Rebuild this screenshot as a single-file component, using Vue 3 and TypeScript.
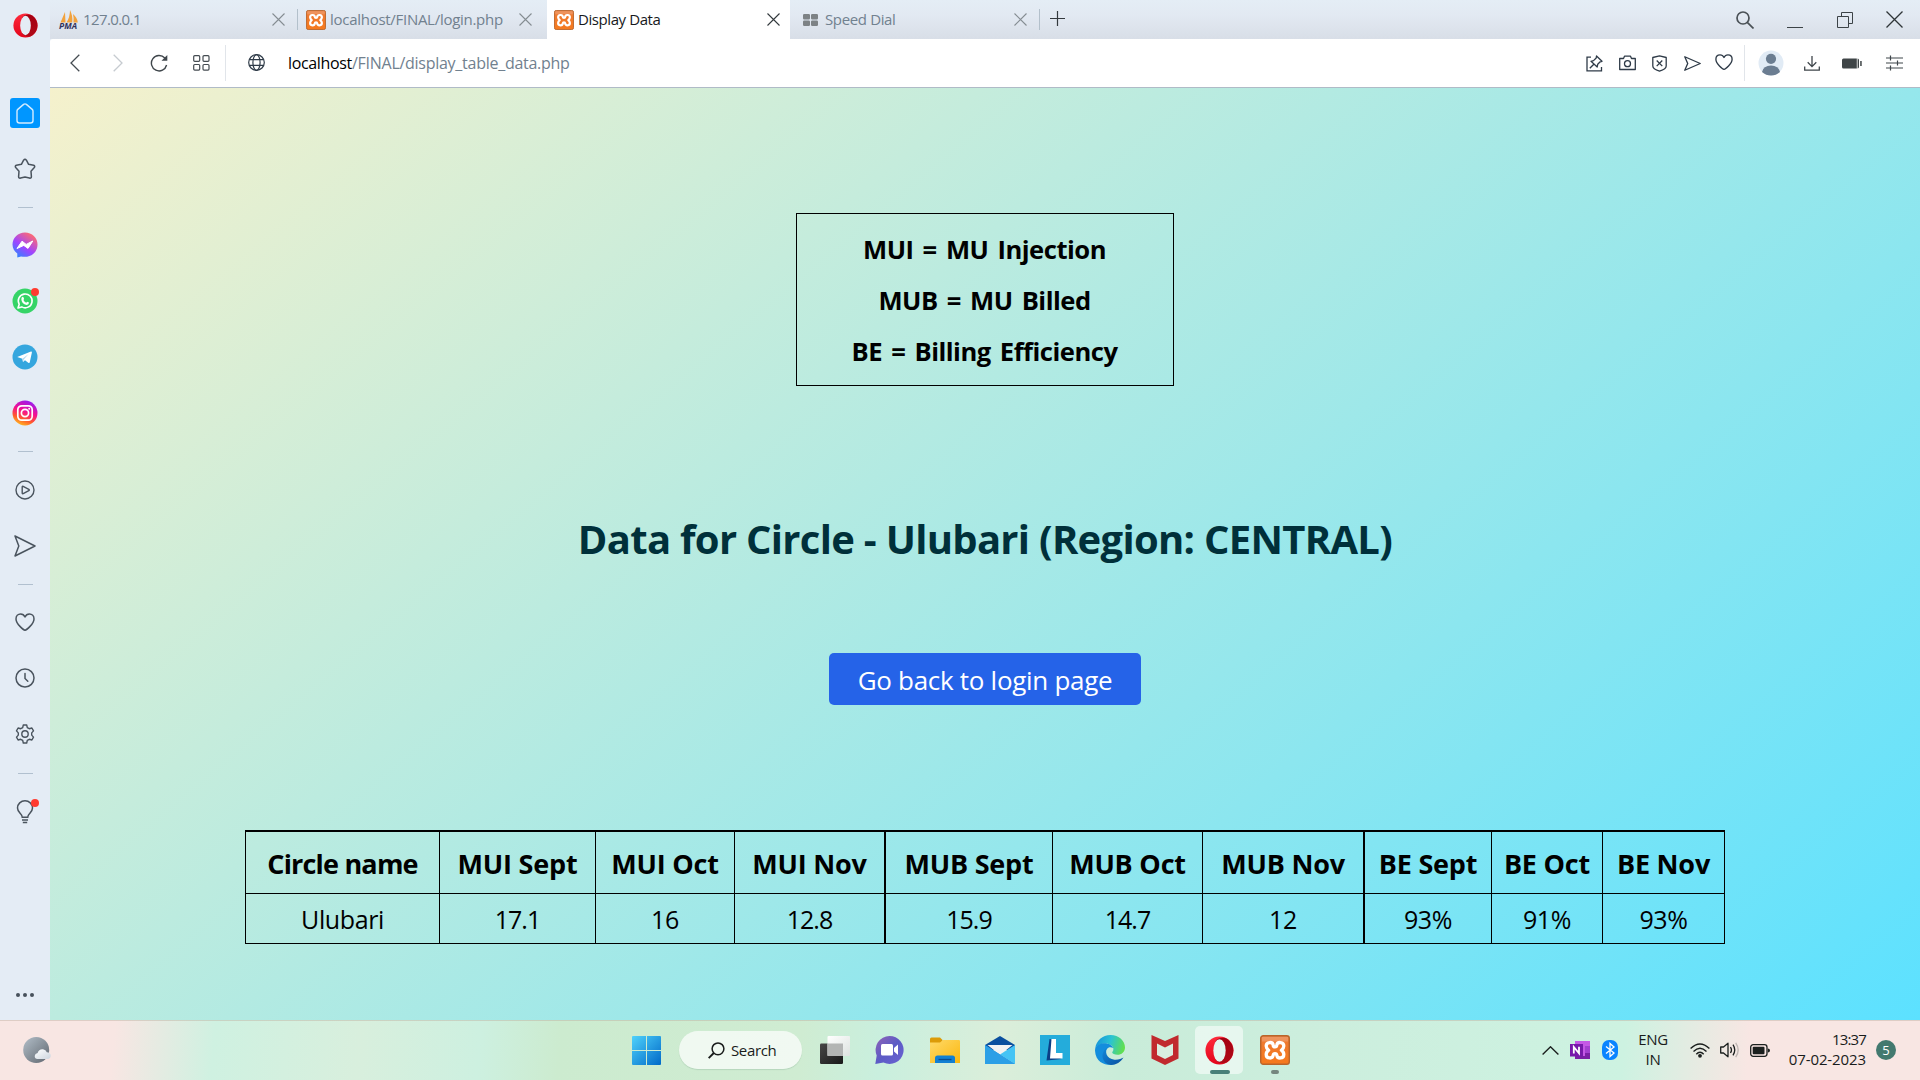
<script setup lang="ts">
interface Column {
  head: string
  value: string
  width: number
  kind?: string
}

const legend: string[] = ['MUI = MU Injection', 'MUB = MU Billed', 'BE = Billing Efficiency']

const columns: Column[] = [
  { head: 'Circle name', value: 'Ulubari', width: 194, kind: 'name' },
  { head: 'MUI Sept', value: '17.1', width: 156, kind: 'decimal' },
  { head: 'MUI Oct', value: '16', width: 139 },
  { head: 'MUI Nov', value: '12.8', width: 150, kind: 'decimal' },
  { head: 'MUB Sept', value: '15.9', width: 168, kind: 'group decimal' },
  { head: 'MUB Oct', value: '14.7', width: 150, kind: 'decimal' },
  { head: 'MUB Nov', value: '12', width: 161 },
  { head: 'BE Sept', value: '93%', width: 128, kind: 'group' },
  { head: 'BE Oct', value: '91%', width: 111 },
  { head: 'BE Nov', value: '93%', width: 123, kind: 'last' },
]
</script>

<template>
  <div class="desktop">
    <svg class="defs" width="0" height="0" aria-hidden="true">
      <defs>
        <linearGradient id="op" x1="0" y1="0" x2="0" y2="1">
          <stop offset="0" stop-color="#ff2a3c" /><stop offset="1" stop-color="#e3051b" />
        </linearGradient>
        <linearGradient id="opd" x1="0" y1="0" x2="0" y2="1">
          <stop offset="0" stop-color="#a30012" /><stop offset="1" stop-color="#b00a18" />
        </linearGradient>
        <linearGradient id="msg" x1="0" y1="1" x2=".7" y2="0">
          <stop offset="0" stop-color="#1394ff" /><stop offset=".5" stop-color="#a044ff" /><stop offset="1" stop-color="#ff6b70" />
        </linearGradient>
        <linearGradient id="ig" x1=".2" y1="1" x2=".6" y2="0">
          <stop offset="0" stop-color="#ffc91e" /><stop offset=".3" stop-color="#ff5a2c" /><stop offset=".6" stop-color="#f5108f" /><stop offset="1" stop-color="#9a1cf0" />
        </linearGradient>
        <linearGradient id="xam" x1="0" y1="0" x2="0" y2="1">
          <stop offset="0" stop-color="#e8854a" /><stop offset=".22" stop-color="#ef7a30" /><stop offset="1" stop-color="#f6791c" />
        </linearGradient>
        <linearGradient id="win" x1="0" y1="0" x2="1" y2="1">
          <stop offset="0" stop-color="#4fd2fb" /><stop offset="1" stop-color="#0069c8" />
        </linearGradient>
        <linearGradient id="moon" x1="0" y1="0" x2="1" y2="1">
          <stop offset="0" stop-color="#b3bfc9" /><stop offset="1" stop-color="#5f666e" />
        </linearGradient>
        <linearGradient id="cloud" x1="0" y1="0" x2="1" y2="1">
          <stop offset="0" stop-color="#fff" /><stop offset="1" stop-color="#cdd5de" />
        </linearGradient>
        <linearGradient id="dark" x1="0" y1="0" x2="1" y2="1">
          <stop offset="0" stop-color="#474747" /><stop offset="1" stop-color="#191919" />
        </linearGradient>
        <linearGradient id="pane" x1="0" y1="0" x2="1" y2="1">
          <stop offset="0" stop-color="#fff" /><stop offset="1" stop-color="#dde3e0" />
        </linearGradient>
        <linearGradient id="chat" x1="0" y1="0" x2="1" y2="1">
          <stop offset="0" stop-color="#9163b5" /><stop offset=".5" stop-color="#5c5bc6" /><stop offset="1" stop-color="#6a62d2" />
        </linearGradient>
        <linearGradient id="fold" x1="0" y1="0" x2="1" y2="1">
          <stop offset="0" stop-color="#ffd968" /><stop offset="1" stop-color="#fbb80f" />
        </linearGradient>
        <linearGradient id="edgeTop" x1="0" y1=".3" x2="1" y2=".5">
          <stop offset="0" stop-color="#1593dc" /><stop offset=".5" stop-color="#2bc3d2" /><stop offset="1" stop-color="#62e04b" />
        </linearGradient>
        <linearGradient id="edgeLow" x1="0" y1="0" x2="1" y2="1">
          <stop offset="0" stop-color="#118adb" /><stop offset="1" stop-color="#0a4d9e" />
        </linearGradient>

        <symbol id="i-close" viewBox="0 0 13 13">
          <path d="M.5 .5l12 12M12.5 .5l-12 12" fill="none" stroke="currentColor" stroke-width="1.1" />
        </symbol>
        <symbol id="i-opera" viewBox="0 0 30 30">
          <ellipse cx="15" cy="15" rx="14.5" ry="14.5" fill="url(#op)" />
          <path d="M11 5.2C14 1.6 19.5 .8 23.5 3.4A14.5 14.5 0 0 1 23.5 26.6C19.5 29.2 14 28.4 11 24.8z" fill="url(#opd)" />
          <ellipse cx="15" cy="15" rx="6.4" ry="11.6" fill="var(--hole)" />
        </symbol>
        <symbol id="i-xampp" viewBox="0 0 30 30">
          <rect x=".7" y=".7" width="28.6" height="28.6" rx="2.6" fill="url(#xam)" stroke="#b9652c" stroke-width="1.4" />
          <path d="M2 2h26v4.5H2z" fill="#f0a478" opacity=".55" />
          <path d="M13.2 10.2C12.8 6.4 6.2 6.6 6.2 11C6.2 13.2 7.3 14.2 8.6 15.2C7.2 16.2 6.2 17.3 6.2 19.6C6.2 24 12.8 24 13.2 20.2Q13.4 18.6 15 18.6Q16.6 18.6 16.8 20.2C17.2 24 23.8 24 23.8 19.6C23.8 17.3 22.8 16.2 21.4 15.2C22.7 14.2 23.8 13.2 23.8 11C23.8 6.6 17.2 6.4 16.8 10.2Q16.6 11.9 15 11.9Q13.4 11.9 13.2 10.2z" fill="none" stroke="#fff" stroke-width="3.3" stroke-linejoin="round" />
        </symbol>
        <symbol id="i-send" viewBox="0 0 22 22">
          <path d="M1 1L21 11L1 21L4.8 11z" fill="none" stroke="currentColor" stroke-width="1.5" stroke-linejoin="round" />
        </symbol>
        <symbol id="i-heart" viewBox="0 0 20 20">
          <path d="M10 18.2C8.6 18 1 12 1 6.9C1 4 3 2 5.6 2C7.8 2 9.2 3.2 10 5C10.8 3.2 12.2 2 14.4 2C17 2 19 4 19 6.9C19 12 11.4 18 10 18.2z" fill="none" stroke="currentColor" stroke-width="1.5" stroke-linejoin="round" />
        </symbol>
      </defs>
    </svg>

    <div class="browser">
      <aside class="sidebar">
        <div class="logo"><svg width="25" height="27" class="opera-side"><use href="#i-opera" /></svg></div>
        <div class="item start">
          <span class="home"><svg width="18" height="21" viewBox="0 0 18 21"><path d="M7.6 1.4L1.8 6.4Q1 7.1 1 8.2V17.5Q1 20 3.5 20H14.5Q17 20 17 17.5V8.2Q17 7.1 16.2 6.4L10.4 1.4Q9 .4 7.6 1.4z" fill="none" stroke="#d4ecff" stroke-width="1.4" /></svg></span>
        </div>
        <div class="item"><svg width="22" height="22" viewBox="0 0 22 22"><path d="M9.6 2.2Q11 .4 12.4 2.2L14.6 6.3L19.6 7.2Q21.4 7.9 20.3 9.5L17 13.3L17.4 18.6Q17.3 20.6 15.4 20L11 18.9L6.6 20Q4.7 20.6 4.6 18.6L5 13.3L1.7 9.5Q.6 7.9 2.4 7.2L7.4 6.3z" fill="none" stroke="currentColor" stroke-width="1.5" stroke-linejoin="round" /></svg></div>
        <div class="rule"></div>
        <div class="item"><svg width="26" height="26" viewBox="0 0 26 26"><path d="M13 .5C6 .5 .5 5.6 .5 12.5C.5 16.2 2.5 19.5 5.3 21.6V25.5L9 24.4C18 26.5 25.5 21 25.5 12.5C25.5 5.6 20 .5 13 .5z" fill="url(#msg)" /><path d="M5 16.5L10 9.2L14.2 12.4L20.8 9L16 16.4L11.8 13.4z" fill="#fff" stroke="#fff" stroke-linejoin="round" /></svg></div>
        <div class="item">
          <svg width="26" height="26" viewBox="0 0 26 26"><circle cx="13" cy="13" r="12.5" fill="#35d467" /><path d="M6 20L7.2 16.3A6.9 6.9 0 1 1 9.8 18.9z" fill="none" stroke="#fff" stroke-width="1.6" stroke-linejoin="round" /><path d="M9.8 9.3Q10.9 8.3 11.6 9.5L12.1 10.9L11.4 12Q12.5 14 14.2 14.7L15.2 13.7L17 14.6Q17 16.9 14.7 16.9Q9.5 15.9 9.3 10.9z" fill="#fff" /></svg>
          <i class="dot"></i>
        </div>
        <div class="item"><svg width="26" height="26" viewBox="0 0 26 26"><circle cx="13" cy="13" r="12.5" fill="#35a6de" /><path d="M5.2 13L19 7.6Q20 7.4 19.9 8.4L17.7 18.6Q17.4 19.4 16.6 18.9L13 16.2L11 18.1L10.4 14.8z" fill="#fff" /><path d="M10.4 14.8L16.6 10L11.8 15.4L11 18.1z" fill="#b5d8ee" /></svg></div>
        <div class="item"><svg width="26" height="26" viewBox="0 0 26 26"><circle cx="13" cy="13" r="12.5" fill="url(#ig)" /><rect x="5.8" y="5.8" width="14.4" height="14.4" rx="4" fill="none" stroke="#fff" stroke-width="1.7" /><circle cx="13" cy="13" r="3.6" fill="none" stroke="#fff" stroke-width="1.7" /><circle cx="17.2" cy="8.8" r="1" fill="#fff" /></svg></div>
        <div class="rule r2"></div>
        <div class="item"><svg width="20" height="20" viewBox="0 0 20 20"><g fill="none" stroke="currentColor" stroke-width="1.4"><circle cx="10" cy="10" r="9" /><path d="M7.2 6.9Q7.2 5.9 8.2 6.3L13.8 9.3Q14.8 10 13.8 10.7L8.2 13.7Q7.2 14.1 7.2 13.1z" /></g></svg></div>
        <div class="item"><svg width="22" height="22"><use href="#i-send" /></svg></div>
        <div class="rule"></div>
        <div class="item"><svg width="20" height="20"><use href="#i-heart" /></svg></div>
        <div class="item"><svg width="20" height="20" viewBox="0 0 20 20"><g fill="none" stroke="currentColor" stroke-width="1.5" stroke-linecap="round"><circle cx="10" cy="10" r="9" /><path d="M10 5.5V10.5L12.8 13.3" /></g></svg></div>
        <div class="item"><svg width="20" height="20" viewBox="0 0 20 20"><g fill="none" stroke="currentColor" stroke-width="1.4" stroke-linejoin="round"><path d="M8.3 1H11.7L12.3 3.6L14.3 4.7L16.9 4L18.5 6.9L16.7 8.9V11.1L18.5 13.1L16.9 16L14.3 15.3L12.3 16.4L11.7 19H8.3L7.7 16.4L5.7 15.3L3.1 16L1.5 13.1L3.3 11.1V8.9L1.5 6.9L3.1 4L5.7 4.7L7.7 3.6z" /><circle cx="10" cy="10" r="3.2" /></g></svg></div>
        <div class="rule r4"></div>
        <div class="item">
          <svg width="18" height="24" viewBox="0 0 18 24"><path d="M6 16.5C6 13.5 1.5 12.5 1.5 8A7.5 7.2 0 0 1 16.5 8C16.5 12.5 12 13.5 12 16.5M5.5 17.3H12.5M6 19.9H12M6.8 22.5H11.2" fill="none" stroke="currentColor" stroke-width="1.5" /></svg>
          <i class="dot"></i>
        </div>
        <div class="more"><i></i><i></i><i></i></div>
      </aside>

      <div class="window">
        <header class="tabs">
          <div class="tab first">
            <svg class="fav pma-icon" width="20" height="20" viewBox="0 0 20 20"><path d="M6 2L1.5 12.5H6.5zM11 0Q14 6 13.2 12.5H7.5Q11 7 11 0zM14 4Q18.5 8 18.8 12.5H14.5Q15 8 14 4z" fill="#f2a23c" /><text x="0" y="19.3" class="pma">PMA</text></svg>
            <span class="label t1">127.0.0.1</span>
            <svg class="x" width="13" height="13"><use href="#i-close" /></svg>
          </div>
          <div class="tab second">
            <svg class="fav" width="20" height="20"><use href="#i-xampp" /></svg>
            <span class="label t2">localhost/FINAL/login.php</span>
            <svg class="x" width="13" height="13"><use href="#i-close" /></svg>
          </div>
          <div class="tab active">
            <svg class="fav" width="20" height="20"><use href="#i-xampp" /></svg>
            <span class="label t3">Display Data</span>
            <svg class="x" width="13" height="13"><use href="#i-close" /></svg>
          </div>
          <div class="tab dial">
            <svg class="fav" width="15" height="12" viewBox="0 0 15 12"><path d="M1.2 0H5.8Q7 0 7 1.2V4.3Q7 5.5 5.8 5.5H1.2Q0 5.5 0 4.3V1.2Q0 0 1.2 0zM9.2 0H13.8Q15 0 15 1.2V4.3Q15 5.5 13.8 5.5H9.2Q8 5.5 8 4.3V1.2Q8 0 9.2 0zM1.2 6.5H5.8Q7 6.5 7 7.7V10.8Q7 12 5.8 12H1.2Q0 12 0 10.8V7.7Q0 6.5 1.2 6.5zM9.2 6.5H13.8Q15 6.5 15 7.7V10.8Q15 12 13.8 12H9.2Q8 12 8 10.8V7.7Q8 6.5 9.2 6.5z" fill="#7d8285" /></svg>
            <span class="label t4">Speed Dial</span>
            <svg class="x" width="13" height="13"><use href="#i-close" /></svg>
          </div>
          <svg class="plus" width="15" height="15" viewBox="0 0 15 15"><path d="M7.5 0V15M0 7.5H15" stroke="#33393d" stroke-width="1.2" /></svg>
          <div class="controls">
            <svg width="18" height="18" viewBox="0 0 18 18"><g fill="none" stroke="#4a5156" stroke-width="1.7"><circle cx="7" cy="7" r="6" /><path d="M11.3 11.3L17.5 17.5" /></g></svg>
            <svg width="16" height="18" viewBox="0 0 16 18"><path d="M0 16.5H16" stroke="#3c4347" stroke-width="1" /></svg>
            <svg width="16" height="16" viewBox="0 0 16 16"><path d="M.5 4.5H11.5V15.5H.5zM4.5 4.5V.5H15.5V11.5H11.5" fill="none" stroke="#3c4347" stroke-width="1" /></svg>
            <svg width="17" height="17" viewBox="0 0 17 17"><path d="M.5 .5l16 16M16.5 .5l-16 16" stroke="#2f3538" stroke-width="1.3" /></svg>
          </div>
        </header>

        <nav class="toolbar">
          <svg width="10" height="18" viewBox="0 0 10 18"><path d="M9.3 .8L1 9L9.3 17.2" fill="none" stroke="#454c52" stroke-width="1.3" /></svg>
          <svg width="10" height="18" viewBox="0 0 10 18"><path d="M.7 .8L9 9L.7 17.2" fill="none" stroke="#c6cbd0" stroke-width="1.3" /></svg>
          <svg width="18" height="18" viewBox="0 0 18 18"><path d="M14.8 4A7.7 7.7 0 1 0 16.6 11" fill="none" stroke="#3f464b" stroke-width="1.4" /><path d="M17.3 1V6.8H11.5z" fill="#3f464b" /></svg>
          <svg width="17" height="16" viewBox="0 0 17 16"><g fill="none" stroke="#454c52" stroke-width="1.2"><rect x=".7" y=".7" width="6" height="5.6" rx="1" /><rect x="10" y=".7" width="6" height="5.6" rx="1" /><rect x=".7" y="9.5" width="6" height="5.6" rx="1" /><rect x="10" y="9.5" width="6" height="5.6" rx="1" /></g></svg>
          <i class="bar"></i>
          <svg class="globe" width="17" height="17" viewBox="0 0 17 17"><g fill="none" stroke="#2f3b48" stroke-width="1.2"><circle cx="8.5" cy="8.5" r="7.8" /><ellipse cx="8.5" cy="8.5" rx="3.6" ry="7.8" /><path d="M1.4 5.6H15.6M1.4 11.4H15.6" /></g></svg>
          <p class="url"><b>localhost</b>/FINAL/display_table_data.php</p>
          <svg width="17" height="17" viewBox="0 0 17 17"><g fill="none" stroke="#2f3b48" stroke-width="1.3"><path d="M5 2.2H1V15.8H15.5V12" /><path d="M10.5 1L16 6.3L14.2 6.8L11.7 9.3L11.2 12L5 6.3L7.5 5.6L10.2 3zM7.8 9.2L3.8 13.2" stroke-linejoin="round" /></g></svg>
          <svg width="17" height="16" viewBox="0 0 17 16"><g fill="none" stroke="#2f3b48" stroke-width="1.3"><path d="M.7 3.5H4.5L5.5 1.2H11.5L12.5 3.5H16.3V14.5H.7z" stroke-linejoin="round" /><circle cx="8.5" cy="8.7" r="3" /></g></svg>
          <svg width="15" height="17" viewBox="0 0 15 17"><g fill="none" stroke="#2f3b48" stroke-width="1.3"><path d="M7.5 .8L14.2 2.5V11Q14.2 14 7.5 16.2Q.8 14 .8 11V2.5z" stroke-linejoin="round" /><path d="M4.7 5.5L10.3 11.1M10.3 5.5L4.7 11.1" /></g></svg>
          <svg class="ink" width="17" height="15" viewBox="0 0 22 22" preserveAspectRatio="none"><path d="M1 1L21 11L1 21L4.8 11z" fill="none" stroke="currentColor" stroke-width="1.7" stroke-linejoin="round" /></svg>
          <svg class="ink lift" width="18" height="18"><use href="#i-heart" /></svg>
          <i class="bar"></i>
          <svg width="26" height="26" viewBox="0 0 26 26"><circle cx="13" cy="13" r="12.5" fill="#e1ebf5" /><circle cx="13" cy="8.8" r="5.1" fill="#6b7d91" /><path d="M4 22Q5.5 15.5 13 15.5Q20.5 15.5 22 22Q18 25.5 13 25.5Q8 25.5 4 22z" fill="#6b7d91" /></svg>
          <svg width="16" height="15" viewBox="0 0 16 15"><path d="M8 0V10.5M3.7 6.3L8 10.6L12.3 6.3M.7 10.5V14.2H15.3V10.5" fill="none" stroke="#3f464b" stroke-width="1.3" /></svg>
          <svg width="20" height="11" viewBox="0 0 20 11"><path d="M1.5 .5H14.8V10.5H1.5Q0 10.5 0 9V2Q0 .5 1.5 .5zM15.6 .5Q17 .7 17 2V9Q17 10.3 15.6 10.5zM18.2 3H19.7V8H18.2z" fill="#3f4547" /></svg>
          <svg width="17" height="16" viewBox="0 0 17 16"><path d="M0 3H17M0 8H17M0 13H17M4.5 .5V5.5M11.5 5.5V10.5M4.5 10.5V15.5" stroke="#3f464b" stroke-width="1.2" /></svg>
        </nav>

        <main class="page">
          <section class="legend">
            <p v-for="line in legend" :key="line">{{ line }}</p>
          </section>
          <h1>Data for Circle - Ulubari (Region: CENTRAL)</h1>
          <a class="back">Go back to login page</a>
          <table>
            <colgroup><col v-for="c in columns" :key="c.head" :style="{ width: c.width + 'px' }" /></colgroup>
            <thead><tr><th v-for="c in columns" :key="c.head" :class="c.kind">{{ c.head }}</th></tr></thead>
            <tbody><tr><td v-for="c in columns" :key="c.head" :class="c.kind">{{ c.value }}</td></tr></tbody>
          </table>
        </main>
      </div>
    </div>

    <footer class="taskbar">
      <div class="weather"><svg width="28" height="26" viewBox="0 0 28 26"><circle cx="13.2" cy="13" r="13" fill="url(#moon)" /><path d="M14.5 22Q11.7 21.8 11.7 19Q11.9 16.4 14.6 15.9Q16 11.8 20 12.2Q23 12.6 23.8 15.2Q27.8 15.4 27.8 18.5Q27.7 21.8 24.5 22z" fill="url(#cloud)" /></svg></div>

      <div class="apps">
        <span class="app"><svg width="29" height="29" viewBox="0 0 29 29"><path d="M1 0H14V14H0V1Q0 0 1 0zM15 0H28Q29 0 29 1V14H15zM0 15H14V29H1Q0 29 0 28zM15 15H29V28Q29 29 28 29H15z" fill="url(#win)" /></svg></span>
        <div class="search">
          <svg width="17" height="17" viewBox="0 0 17 17"><g fill="none" stroke="#191c1b" stroke-width="1.5"><circle cx="10" cy="6.8" r="5.9" /><path d="M5.8 11L.7 16.2" stroke-width="1.9" /></g></svg>
          <span>Search</span>
        </div>
        <span class="app"><svg width="30" height="28" viewBox="0 0 30 28"><rect y="7.5" width="23" height="20.5" rx="1.2" fill="url(#dark)" /><rect x="7.5" width="22.5" height="20" rx="1" fill="url(#pane)" /><path d="M7.5 7.5H23V20H7.5z" fill="#b3b5b4" /></svg></span>
        <span class="app"><svg width="29" height="28" viewBox="0 0 29 28"><path d="M14.5 0A14 14 0 1 1 8.5 26.6L.3 28L1.7 19.5A14 14 0 0 1 14.5 0z" fill="url(#chat)" /><rect x="6" y="8" width="12" height="11.5" rx="1.5" fill="#fff" /><path d="M19 12L23 8.5V19L19 15.5z" fill="#fff" /></svg></span>
        <span class="app"><svg width="30" height="26" viewBox="0 0 30 26"><path d="M0 2Q0 .5 1.5 .5H10L12.5 3V9H0z" fill="#dc9b08" /><path d="M0 5.5H10L13 3H29Q30 3 30 4V26H0z" fill="url(#fold)" /><path d="M5 26V21Q5 18.5 7.5 18.5H22.5Q25 18.5 25 21V26z" fill="#1280d3" /><path d="M8.5 22.5H21.5" stroke="#0a4c90" stroke-width="1.3" /></svg></span>
        <span class="app"><svg width="30" height="28" viewBox="0 0 30 28"><path d="M0 9L15 0L30 9V14H0z" fill="#0a4f9f" /><path d="M2.5 9H27.5L15 19z" fill="#f3f3f3" /><path d="M0 9L30 28H1Q0 28 0 27z" fill="#1e8fe0" /><path d="M30 9L15 18.5L30 28z" fill="#45c4f5" /><path d="M15 18.5L0 9V28H30z" fill="#2c9fe6" /></svg></span>
        <span class="app"><svg width="30" height="30" viewBox="0 0 30 30"><path d="M0 0H30V30H0z" fill="#24acdb" /><path d="M9.5 4L12 4.5V20L22 24L6.5 25.5z" fill="#0b3f86" /><path d="M11.5 4H16V18H22.5V23.5H10z" fill="#fff" /></svg></span>
        <span class="app"><svg width="30" height="30" viewBox="0 0 30 30"><path d="M.2 13.5C1.2 5.5 7.5 0 15.5 0C24 0 30 6 30 12.5C30 17 26.5 19.8 22.5 19.8C19.5 19.8 17.2 18.5 17.2 17.5C17.2 16.8 18.4 16.2 18.4 14C18.4 11 15 8.5 10.5 8.5C6 8.5 2 10.5 .2 13.5z" fill="url(#edgeTop)" /><path d="M.2 13.5C2 9.6 6 8.2 9.5 8.2C14 8.2 17.6 10.5 18.2 13C14 10.5 9.5 14 10.5 19.5C11.5 25 16 28.5 19.5 29C16 31 .5 30.5 0 15.5z" fill="#138ddd" /><path d="M13 12.5C9 16 11.5 24 19.5 24.7C23.5 25 26.5 23.5 28.5 22.5C26 27 21 30 16 30C10 29.5 7 24 7.5 20C8 16 10.5 13.2 13 12.5z" fill="url(#edgeLow)" /></svg></span>
        <span class="app"><svg width="28" height="30" viewBox="0 0 28 30"><path d="M.5 0L14 6L27.5 0V23.5L14 30L.5 23.5z" fill="#c1292e" /><path d="M6 8.5L14 12.5L22 8.5V20L14 24L6 20z" fill="#d9eee0" /></svg></span>
        <span class="app open"><svg class="opera-task" width="29" height="29"><use href="#i-opera" /></svg><i class="run wide"></i></span>
        <span class="app"><svg width="30" height="30"><use href="#i-xampp" /></svg><i class="run"></i></span>
      </div>

      <div class="tray">
        <svg class="chev" width="17" height="9" viewBox="0 0 17 9"><path d="M.6 8.4L8.5 .8L16.4 8.4" fill="none" stroke="#1b1f1e" stroke-width="1.4" /></svg>
        <svg class="note" width="20" height="18" viewBox="0 0 20 18"><path d="M5 0H20V18H5z" fill="#c558e6" /><path d="M15 5H20V12H15z" fill="#a33fd0" /><path d="M15 12H20V18H5V15H15z" fill="#7a1fa5" /><path d="M0 3H13V15.5H0z" fill="#7719aa" /><path d="M3.8 12.5V6L9 12.3V5.8" fill="none" stroke="#fff" stroke-width="1.8" /></svg>
        <svg class="blue" width="16" height="20" viewBox="0 0 16 20"><rect width="16" height="20" rx="7" fill="#0a84ff" /><path d="M4 6.5L12 13L8 16.5V3.5L12 7L4 13.5" fill="none" stroke="#fff" stroke-width="1.3" /></svg>
        <p class="lang"><span>ENG</span><span>IN</span></p>
        <svg class="wifi" width="20" height="15" viewBox="0 0 20 15"><g fill="none" stroke="#1b1f1e" stroke-width="1.4"><path d="M.6 5.5Q10 -3.7 19.4 5.5M3.5 8.5Q10 2 16.5 8.5M6.3 11.2Q10 7.3 13.7 11.2" /></g><circle cx="10" cy="12.8" r="1.9" fill="#1b1f1e" /></svg>
        <svg class="vol" width="20" height="16" viewBox="0 0 20 16"><g fill="none" stroke="#1b1f1e" stroke-width="1.3"><path d="M.7 5H3.5L8 1.2V14.8L3.5 11H.7z" stroke-linejoin="round" /><path d="M10.5 5Q12.5 8 10.5 11M13 2.7Q16.5 8 13 13.3" /><path d="M15.7 .8Q20.7 8 15.7 15.2" opacity=".25" /></g></svg>
        <svg class="batt" width="20" height="13" viewBox="0 0 20 13"><rect x=".7" y=".7" width="16.3" height="11.6" rx="2.5" fill="none" stroke="#1b1f1e" stroke-width="1.3" /><rect x="2.7" y="2.7" width="11.8" height="7.6" rx="1" fill="#1b1f1e" /><path d="M17.8 4.5Q20 4.5 20 6.5Q20 8.5 17.8 8.5z" fill="#1b1f1e" /></svg>
        <p class="clock"><span class="hm">13:37</span><span class="date">07-02-2023</span></p>
        <span class="count">5</span>
      </div>
    </footer>
  </div>
</template>

<style>
body { margin: 0; overflow: hidden; }
</style>

<style scoped>
.desktop {
  width: 1920px;
  height: 1080px;
  display: flex;
  flex-direction: column;
  font-family: 'Open Sans', 'Noto Sans', sans-serif;
  font-size: 15px;
  color: #000;
}
.defs { position: absolute; }
svg { display: block; flex: none; }
p { margin: 0; }
.browser { height: 1020px; display: flex; background: #e4ecf5; }

.sidebar { width: 50px; display: flex; flex-direction: column; align-items: center; color: #4a545e; }
.logo { height: 85px; padding-top: 12px; box-sizing: border-box; }
.opera-side { --hole: #e4ecf5; }
.item { height: 56px; width: 50px; box-sizing: border-box; padding-right: 1px; display: flex; align-items: center; justify-content: center; position: relative; }
.start { padding-right: 0; }
.home { width: 30px; height: 30px; border-radius: 3px; background: #0096ff; display: flex; align-items: center; justify-content: center; }
.rule { height: 20px; width: 15px; display: flex; align-items: center; }
.rule::before { content: ''; height: 1px; width: 15px; background: #b1c0cf; }
.r2 { height: 21px; }
.r4 { height: 22px; }
.dot { position: absolute; left: 31px; top: 15px; width: 8px; height: 8px; border-radius: 4px; background: #ff3b30; }
.more { margin-top: auto; height: 50px; display: flex; align-items: center; gap: 3px; }
.more i { width: 4px; height: 4px; border-radius: 2px; background: #47515b; }

.window { flex: 1; min-width: 0; display: flex; flex-direction: column; }
.tabs { height: 39px; display: flex; background: linear-gradient(#e4edf5 0%, #e2e9f2 40%, #d8dee7 100%); color: #71818f; }
.tab { height: 39px; box-sizing: border-box; display: flex; align-items: center; }
.fav { margin-right: 4px; }
.x { margin-left: auto; color: #858d92; }
.label { white-space: nowrap; line-height: 39px; }
.first { width: 247px; padding: 0 12px 0 9px; }
.second { width: 250px; padding: 0 15px 0 8px; border-left: 1px solid #b3c0cb; border-image: linear-gradient(transparent 24%, #b3c0cb 24%, #b3c0cb 76%, transparent 76%) 1; }
.active { width: 243px; padding: 0 10px 0 7px; background: #fff; color: #17191c; }
.active .x { color: #33393d; }
.dial { width: 250px; padding: 0 12px 0 13px; border-right: 1px solid #b3c0cb; border-image: linear-gradient(transparent 24%, #b3c0cb 24%, #b3c0cb 76%, transparent 76%) 1; }
.dial .fav { margin-right: 7px; }
.t1 { letter-spacing: -0.6px; }
.t2 { letter-spacing: -0.28px; }
.t3 { letter-spacing: -0.42px; }
.t4 { letter-spacing: -0.36px; }
.pma-icon { overflow: visible; }
.pma { font-size: 8.5px; font-weight: 700; font-style: italic; fill: #32325c; }
.plus { margin: 11px 0 0 10px; }
.controls { margin-left: auto; margin-right: 17px; display: flex; align-items: center; }
.controls svg:nth-child(1) { margin-right: 33px; }
.controls svg:nth-child(2) { margin-right: 34px; }
.controls svg:nth-child(3) { margin-right: 33px; }

.toolbar {
  height: 49px;
  box-sizing: border-box;
  border-bottom: 1px solid #b0bbc7;
  border-top-left-radius: 3px;
  background: #fff;
  display: grid;
  grid-template-columns: 50px 36px 46px 38px 11px 50px 1fr 34px 32px 32px 34px 30px 11px 41px 42px 38px 46px 3px;
  align-items: center;
  justify-items: center;
}
.bar { width: 1px; height: 36px; background: #e1e5ea; }
.globe { margin-bottom: 2px; }
.ink { color: #2f3b48; }
.lift { margin-bottom: 2px; }
.url { justify-self: start; padding-left: 7px; font-size: 16px; line-height: 48px; letter-spacing: -0.27px; color: #71818f; white-space: nowrap; }
.url b { font-weight: 400; color: #000; letter-spacing: -0.34px; }

.page {
  flex: 1;
  box-sizing: border-box;
  padding-top: 125px;
  display: flex;
  flex-direction: column;
  align-items: center;
  background: linear-gradient(140deg, #f5f1cc, #5ce1ff);
}
.legend { width: 378px; height: 173px; box-sizing: border-box; border: 1px solid #000; padding-top: 10px; margin-right: 1px; text-align: center; font-size: 25.6px; font-weight: 700; letter-spacing: -0.5px; word-spacing: 3px; }
.legend p { height: 51px; line-height: 51px; }
h1 { margin: 123px 0 0; height: 60px; line-height: 60px; font-size: 40px; font-weight: 700; letter-spacing: -0.7px; color: #00303a; white-space: nowrap; }
.back { margin-top: 84px; width: 312px; height: 52px; box-sizing: border-box; padding-top: 2px; border-radius: 5px; background: #2563e8; color: #fff; font-size: 26px; line-height: 51px; letter-spacing: -0.29px; text-align: center; }
table { margin-top: 125px; width: 1480px; table-layout: fixed; border-collapse: separate; border-spacing: 0; }
th, td { box-sizing: border-box; padding: 2px 0 0; border-left: 1px solid #000; border-bottom: 1px solid #000; text-align: center; white-space: nowrap; }
th { height: 64px; border-top: 2px solid #000; font-size: 27px; line-height: 59px; font-weight: 700; letter-spacing: -0.2px; }
td { height: 50px; font-size: 25px; line-height: 47px; letter-spacing: -0.4px; }
.group { border-left-width: 2px; }
.last { border-right: 1px solid #000; }
th.name { letter-spacing: -0.8px; }
td.decimal { letter-spacing: -0.95px; }

.taskbar {
  height: 60px;
  box-sizing: border-box;
  border-top: 1px solid rgba(190, 175, 160, 0.45);
  padding-bottom: 1px;
  display: flex;
  background: linear-gradient(95deg, #f8e6e3 0, #f8e6e3 115px, #cff1e1 215px, #d8efdd 360px, #cdf0e0 480px, #ccebcf 560px, #cfecd2 800px, #c9efde 880px, #dbeeda 1000px, #c9ecd9 1120px, #cceedd 1300px, #cdf2e1 1620px, #f8e6e3 1745px);
}
.weather { width: 619px; padding: 16px 0 0 23px; box-sizing: border-box; }
.apps { display: flex; align-items: center; }
.app { position: relative; width: 55px; height: 58px; display: flex; align-items: center; justify-content: center; }
.search { width: 123px; height: 38px; margin: 0 5px; border-radius: 19px; box-sizing: border-box; padding-left: 29px; display: flex; align-items: center; gap: 6px; background: rgba(255, 255, 255, 0.7); box-shadow: 0 1px 1px rgba(0, 60, 40, 0.12); color: #191c1b; letter-spacing: -0.36px; }
.open::before { content: ''; position: absolute; left: 3px; top: 5px; width: 48px; height: 48px; border-radius: 5px; background: rgba(255, 255, 255, 0.55); }
.open svg { position: relative; }
.opera-task { --hole: #e4f6f0; }
.run { position: absolute; bottom: 5px; width: 8px; height: 4px; border-radius: 2px; background: #75877f; }
.wide { width: 20px; background: #478078; }
.tray { margin-left: auto; margin-right: 24px; display: flex; align-items: center; color: #191c1b; }
.chev { margin-right: 11px; }
.note { margin-right: 12px; }
.blue { margin-right: 21px; }
.lang { width: 28px; margin-right: 23px; padding-bottom: 2px; display: flex; flex-direction: column; align-items: center; line-height: 20px; letter-spacing: -0.3px; }
.wifi { margin-right: 10px; }
.vol { margin-right: 10px; }
.batt { margin-right: 19px; }
.clock { width: 77px; margin-right: 10px; padding-bottom: 2px; display: flex; flex-direction: column; align-items: flex-end; line-height: 20px; white-space: nowrap; }
.hm { letter-spacing: -0.85px; }
.date { letter-spacing: -0.1px; }
.count { width: 20px; height: 20px; border-radius: 10px; background: #43796f; color: #fff; font-size: 13px; line-height: 20px; text-align: center; }
</style>
